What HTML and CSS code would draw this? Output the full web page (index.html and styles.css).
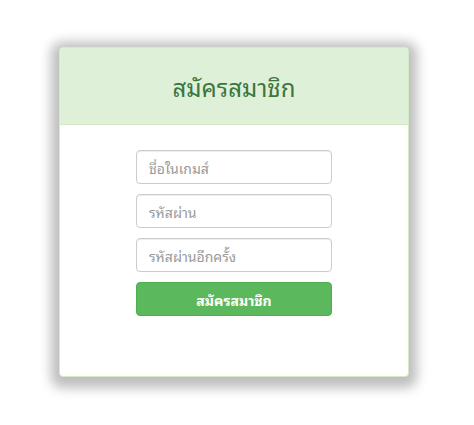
FILE: index.html
```html
<!DOCTYPE html>
<html lang="th">
<head>
<meta charset="utf-8">
<title>สมัครสมาชิก</title>
<link rel="stylesheet" href="styles.css">
</head>
<body>
<div class="page">
  <div class="card">
    <div class="card-head">
      <h3 class="card-title">สมัครสมาชิก</h3>
    </div>
    <div class="card-body">
      <form class="form">
        <input class="field" type="text" placeholder="ชื่อในเกมส์">
        <input class="field" type="password" placeholder="รหัสผ่าน">
        <input class="field" type="password" placeholder="รหัสผ่านอีกครั้ง">
        <button class="btn" type="button">สมัครสมาชิก</button>
      </form>
    </div>
  </div>
</div>
</body>
</html>
```
FILE: styles.css
```css
* { box-sizing: border-box; }
html, body { margin: 0; padding: 0; background: #fff; height: 100%; }
body {
  font-family: Tahoma, "Noto Sans Thai Looped", Loma, Garuda, Norasi, "Noto Sans Thai", "Noto Sans", "DejaVu Sans", sans-serif;
  font-size: 14px;
  color: #333;
}
.page {
  min-height: 100%;
  padding: 47px 0 60px 59px;
}
.card {
  width: 350px;
  height: 330px;
  border: 1px solid #d6e9c6;
  border-radius: 4px;
  background: #fff;
  box-shadow: 0 3px 12px 8px rgba(0, 0, 0, 0.26);
  display: flex;
  flex-direction: column;
}
.card-head {
  height: 77px;
  flex: none;
  background: #dff0d8;
  border-bottom: 1px solid #d6e9c6;
  border-radius: 3px 3px 0 0;
  display: flex;
  align-items: center;
  justify-content: center;
}
.card-title {
  margin: 0;
  font-size: 24px;
  font-weight: normal;
  color: #3c763d;
  line-height: 1;
}
.card-body {
  padding-top: 25px;
  display: flex;
  justify-content: center;
}
.form {
  width: 196px;
  display: flex;
  flex-direction: column;
  gap: 10px;
}
.field {
  height: 34px;
  padding: 6px 12px;
  border: 1px solid #ccc;
  border-radius: 4px;
  font-family: inherit;
  font-size: 14px;
  color: #555;
  box-shadow: inset 0 1px 1px rgba(0, 0, 0, 0.075);
}
.field::placeholder { color: #999; }
.btn {
  height: 34px;
  border: 1px solid #4cae4c;
  border-radius: 4px;
  background: #5cb85c;
  color: #fff;
  font-family: inherit;
  font-size: 14px;
  font-weight: bold;
}
```
